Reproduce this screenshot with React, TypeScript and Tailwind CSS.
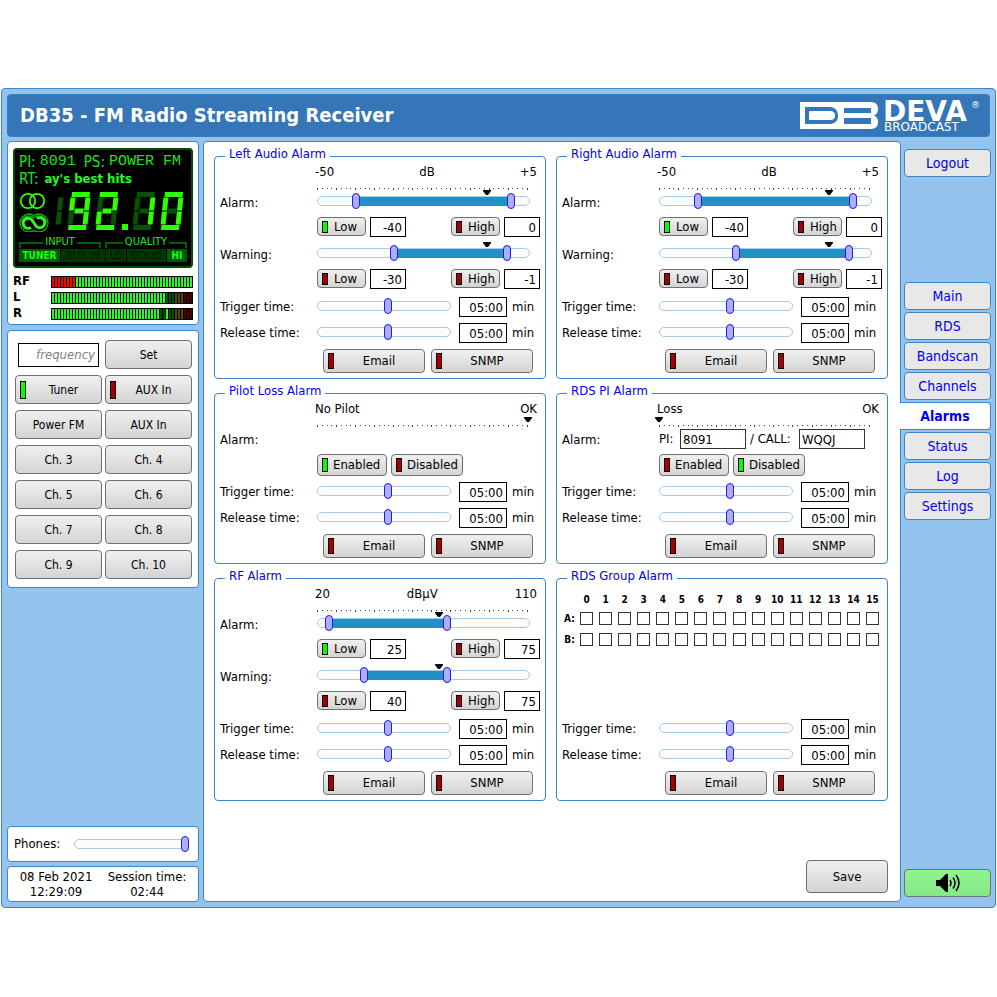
import clsx from "clsx";
import type { ReactNode } from "react";

const button =
  "flex items-center rounded border border-[#707070] bg-linear-to-b from-[#f0f0f0] from-0% via-[#e2e2e2] via-50% to-[#d4d4d4] text-black";
const field = "h-5 border border-black bg-white px-[3px] pt-px text-right";

const thumb =
  "[&::-webkit-slider-thumb]:pointer-events-auto [&::-webkit-slider-thumb]:h-4 [&::-webkit-slider-thumb]:w-2 [&::-webkit-slider-thumb]:appearance-none [&::-webkit-slider-thumb]:rounded-full [&::-webkit-slider-thumb]:border [&::-webkit-slider-thumb]:border-[#1c1cf0] [&::-webkit-slider-thumb]:bg-[#aeaeff]";
const rail = "rounded-full border border-[#a6cbe9] bg-[#fcfcfc]";

function Led({ on, className }: { on?: boolean; className?: string }) {
  return (
    <span
      className={clsx(
        "w-[6px] shrink-0 border border-black",
        on ? "bg-[#00ff00]" : "bg-[#a80000]",
        className
      )}
    />
  );
}

function SmallToggle({ on, children }: { on?: boolean; children: ReactNode }) {
  return (
    <button className={clsx(button, "h-[19px] w-[49px] gap-[6px] pl-1")}>
      <Led on={on} className="h-3" />
      {children}
    </button>
  );
}

function WideToggle({ children }: { children: ReactNode }) {
  return (
    <button className={clsx(button, "h-6 w-[102px] pl-1")}>
      <Led className="h-4" />
      <span className="flex-1 text-center">{children}</span>
    </button>
  );
}

function Slider({ label, value }: { label: string; value: number }) {
  return (
    <div className="relative flex h-4 flex-1 items-center">
      <div className={clsx(rail, "h-[10px] flex-1")} />
      <input
        type="range"
        aria-label={label}
        defaultValue={value}
        className={clsx("absolute inset-0 h-4 w-full appearance-none bg-transparent", thumb)}
      />
    </div>
  );
}

function Marker({ at }: { at: number }) {
  return (
    <svg
      viewBox="0 0 8 5"
      className="absolute top-0 h-[5px] w-2 -translate-x-1/2"
      style={{ left: `${at}%` }}
    >
      <path d="M0 0h8v1L5 5H3L0 1z" fill="#000" />
    </svg>
  );
}

type Level = { on?: boolean; value: number };

function RangeRow(props: {
  label: string;
  min: number;
  max: number;
  low: Level;
  high: Level;
  marker: number;
}) {
  const { label, min, max, low, high, marker } = props;
  const place = (v: number) => ((v - min) / (max - min)) * 100;
  // the inputs overhang the rail by half a thumb on both sides
  const input = clsx(
    "pointer-events-none absolute top-0 -left-1 h-4 w-[calc(100%+8px)] appearance-none bg-transparent",
    thumb
  );

  return (
    <div className="mb-[5px]">
      <div className="flex h-6 items-center">
        <span className="w-[97px] pt-0.5">{label}:</span>
        <div className="relative mr-[10px] flex h-6 flex-1 items-center pb-0.5">
          <Marker at={marker} />
          <div className="relative flex h-4 flex-1 items-center">
            <div className={clsx(rail, "h-[10px] flex-1")} />
            <div
              className="absolute h-[10px] border-t border-[#a6cbe9] bg-[#2190c2]"
              style={{ left: `${place(low.value)}%`, right: `${100 - place(high.value)}%` }}
            />
            <input type="range" aria-label={`${label} low`} min={min} max={max} defaultValue={low.value} className={input} />
            <input type="range" aria-label={`${label} high`} min={min} max={max} defaultValue={high.value} className={input} />
          </div>
        </div>
      </div>
      <div className="mt-[3px] ml-[97px] flex h-5 items-start gap-1">
        <SmallToggle on={low.on}>Low</SmallToggle>
        <input aria-label={`${label} low level`} defaultValue={low.value} className={clsx(field, "w-9")} />
        <span className="flex-1" />
        <SmallToggle on={high.on}>High</SmallToggle>
        <input aria-label={`${label} high level`} defaultValue={high.value} className={clsx(field, "w-9")} />
      </div>
    </div>
  );
}

function Scale({ labels, marker }: { labels: string[]; marker?: number }) {
  return (
    <>
      <div className="mr-[3px] ml-[95px] flex h-4 items-center justify-between">
        {labels.map((l) => (
          <span key={l}>{l}</span>
        ))}
      </div>
      <div className="relative mr-[10px] ml-[97px] flex h-[10px] items-end justify-between pr-0.5">
        {marker !== undefined && <Marker at={marker} />}
        {Array.from({ length: 45 }, (_, i) => (
          <span key={i} className={clsx("w-px bg-[#444]", i % 4 ? "mb-px h-px" : "h-0.5")} />
        ))}
      </div>
    </>
  );
}

function TimeRow({ label }: { label: string }) {
  return (
    <div className="flex h-[26px] items-center">
      <span className="w-[97px]">{label}:</span>
      <div className="flex flex-1 pb-0.5">
        <Slider label={label} value={53} />
      </div>
      <input aria-label={`${label} value`} defaultValue="05:00" className={clsx(field, "ml-2 w-12")} />
      <span className="w-[33px] pl-[5px]">min</span>
    </div>
  );
}

function Times() {
  return (
    <div className="mt-auto">
      <TimeRow label="Trigger time" />
      <TimeRow label="Release time" />
      <div className="mt-[3px] mr-[7px] flex justify-end gap-[6px]">
        <WideToggle>Email</WideToggle>
        <WideToggle>SNMP</WideToggle>
      </div>
    </div>
  );
}

function AlarmBox({ title, children }: { title: string; children: ReactNode }) {
  return (
    <fieldset className="flex min-w-0 flex-col rounded border border-[#3c86c8] px-[5px] pb-[5px]">
      <legend className="ml-[5px] h-4 px-1 leading-3 text-[#0000f0]">{title}</legend>
      {children}
    </fieldset>
  );
}

function EnableRow({ enabled }: { enabled: boolean }) {
  return (
    <div className="mt-[3px] mb-[3px] ml-[97px] flex gap-1">
      <button className={clsx(button, "h-[22px] w-[70px] gap-[5px] pl-1")}>
        <Led on={enabled} className="h-[14px]" />
        Enabled
      </button>
      <button className={clsx(button, "h-[22px] w-[72px] gap-[5px] pl-1")}>
        <Led on={!enabled} className="h-[14px]" />
        Disabled
      </button>
    </div>
  );
}

function AudioAlarm({ title }: { title: string }) {
  return (
    <AlarmBox title={title}>
      <Scale labels={["-50", "dB", "+5"]} />
      <RangeRow label="Alarm" min={-50} max={5} low={{ on: true, value: -40 }} high={{ value: 0 }} marker={80} />
      <RangeRow label="Warning" min={-50} max={5} low={{ value: -30 }} high={{ value: -1 }} marker={80} />
      <Times />
    </AlarmBox>
  );
}

function GroupAlarm() {
  const groups = Array.from({ length: 16 }, (_, i) => i);
  return (
    <AlarmBox title="RDS Group Alarm">
      <table className="mt-1 w-full table-fixed text-[10px] font-bold">
        <thead>
          <tr className="h-[18px]">
            <td className="w-[15px]" />
            {groups.map((g) => (
              <th key={g} scope="col" className="p-0 text-center align-bottom">
                {g}
              </th>
            ))}
          </tr>
        </thead>
        <tbody>
          {["A", "B"].map((row) => (
            <tr key={row} className="h-[21px]">
              <th scope="row" className="p-0 text-center">
                {row}:
              </th>
              {groups.map((g) => (
                <td key={g} className="p-0 text-center">
                  <input
                    type="checkbox"
                    aria-label={`Group ${g}${row}`}
                    className="mx-auto block size-[13px] appearance-none border border-[#333] bg-white checked:bg-[#0000e8]"
                  />
                </td>
              ))}
            </tr>
          ))}
        </tbody>
      </table>
      <Times />
    </AlarmBox>
  );
}

const segments: Record<string, [number, number, number, number]> = {
  a: [1, 2.5, 19, 2.5],
  b: [17.5, 5.5, 17.5, 18.5],
  c: [17.5, 19.5, 17.5, 32.5],
  d: [1, 35.5, 19, 35.5],
  e: [2.5, 19.5, 2.5, 32.5],
  f: [2.5, 5.5, 2.5, 18.5],
  g: [5.5, 19, 14.5, 19],
};

function Digit({ x, lit, show = "abcdefg" }: { x: number; lit: string; show?: string }) {
  return (
    <g transform={`translate(${x} 0) skewX(-6)`} strokeWidth="5">
      {show.split("").map((s) => {
        const [x1, y1, x2, y2] = segments[s];
        return (
          <line key={s} x1={x1} y1={y1} x2={x2} y2={y2} stroke={lit.includes(s) ? "#2dff00" : "#075200"} />
        );
      })}
    </g>
  );
}

function Display() {
  const cell = "flex h-[13px] items-center justify-center";
  const off = "bg-[#003600] text-[11px] text-[#001200]";
  const on = "bg-[#005a00] text-[10px] font-bold text-[#19ff19]";
  return (
    <div className="rounded border-2 border-[#005000] bg-black px-1 pt-[3px] pb-1 text-[#19e619]">
      <div className="flex h-[17px] items-center text-[15px] whitespace-nowrap">
        PI:
        <span className="ml-1 font-['Liberation_Mono'] text-[15px]">8091</span>
        <span className="ml-2">PS:</span>
        <span className="ml-1 font-['Liberation_Mono'] text-[15px] whitespace-pre">POWER FM</span>
      </div>
      <div className="flex h-[17px] items-center gap-[6px] text-[15px]">
        RT: <b className="text-[13px] text-[#1cff1c]">ay's best hits</b>
      </div>
      <div className="mt-1 flex h-[42px] items-center justify-between">
        <svg viewBox="0 0 30 40" className="h-10 w-[30px]" fill="none">
          <g stroke="#2dff00" strokeWidth="1.8">
            <circle cx="9" cy="9" r="7.200" />
            <circle cx="18" cy="9" r="7.200" />
          </g>
          <path
            d="M15 23.500A9 9 0 1 0 15 38.500A9 9 0 1 0 15 23.500M15 26A7 7 0 0 0 3 31M15 26A7 7 0 0 1 27 31"
            stroke="#1fae10"
            strokeWidth="1.300"
          />
          <path
            d="M12 35.500A5 5 0 1 1 13 28L17 34A5 5 0 1 0 18 26.500"
            stroke="#35f02a"
            strokeWidth="3"
          />
        </svg>
        <svg viewBox="0 0 134 40" className="h-10 w-[134px]" role="img" aria-label="92.10">
          <Digit x={-9} lit="" show="bc" />
          <Digit x={18} lit="abcdfg" />
          <Digit x={46} lit="abdeg" />
          <rect x="69" y="32" width="6" height="6" fill="#2dff00" />
          <Digit x={83} lit="bc" />
          <Digit x={111} lit="abcdef" />
        </svg>
      </div>
      <div className="mt-[3px] flex gap-1 text-[11px] leading-[12px]">
        {["INPUT", "QUALITY"].map((t) => (
          <div key={t} className="flex flex-1 items-end gap-0.5">
            <span className="h-[6px] flex-1 border-t-2 border-l-2 border-[#006000]" />
            {t}
            <span className="h-[6px] flex-1 border-t-2 border-r-2 border-[#006000]" />
          </div>
        ))}
      </div>
      <div className="mt-px flex gap-px">
        <span className={clsx(cell, on, "w-[41px]")}>TUNER</span>
        <span className={clsx(cell, off, "flex-1")}>AUX IN</span>
        <span className={clsx(cell, off, "w-5")}>LO</span>
        <span className={clsx(cell, off, "w-[39px]")}>GOOD</span>
        <span className={clsx(cell, on, "w-5")}>HI</span>
      </div>
    </div>
  );
}

const barColours: Record<string, string> = {
  r: "bg-[#ff0000]",
  g: "bg-[#20ff20]",
  d: "bg-[#0a4d0a]",
  y: "bg-[#4d4a00]",
  m: "bg-[#4d0000]",
};

function Meter({ name, bars }: { name: string; bars: string }) {
  return (
    <div className="flex h-4 items-center text-[13px] font-bold">
      <span className="w-[38px] pb-0.5">{name}</span>
      <div className="flex h-3 flex-1 gap-px border border-black bg-black">
        {bars.split("").map((b, i) => (
          <span key={i} className={clsx("flex-1", barColours[b])} />
        ))}
      </div>
    </div>
  );
}

function Logo() {
  return (
    <svg viewBox="0 0 182 41" className="h-[41px] w-[182px]" role="img" aria-label="DEVA Broadcast" fill="#fff">
      <path
        fillRule="evenodd"
        d="M0 7H78V34H0zM5 12V29H31Q38 28 38 20.500T31 12zM44 13V18H71V13zM44 23V29H71V23z"
        clipPath="url(#logo-edge)"
      />
      <path d="M9 16H30Q35 16 35 20.500T30 25H9z" />
      <clipPath id="logo-edge">
        <path d="M0 7H71Q78 7 78 14Q78 19 74 20.500Q78 22 78 27Q78 34 71 34H0z" />
      </clipPath>
      <text x="83" y="26" fontSize="28" fontWeight="bold" fontFamily="DejaVu Sans">
        DEVA
      </text>
      <text x="84" y="36" fontSize="12" fontFamily="DejaVu Sans">
        BROADCAST
      </text>
      <text x="171" y="13" fontSize="9" fontFamily="DejaVu Sans">
        ®
      </text>
    </svg>
  );
}

const panel = "rounded border border-[#3c86c8] bg-white";
const pages = ["Main", "RDS", "Bandscan", "Channels", "Alarms", "Status", "Log", "Settings"];
const presets = ["Power FM", "AUX In", "Ch. 3", "Ch. 4", "Ch. 5", "Ch. 6", "Ch. 7", "Ch. 8", "Ch. 9", "Ch. 10"];
const navItem =
  "flex h-7 items-center justify-center rounded border border-[#3c86c8] text-[14px] text-[#0000f0]";

export default function App() {
  return (
    <div className="min-h-screen bg-white px-px pt-[88px] pb-[89px] font-['DejaVu_Sans_Condensed','DejaVu_Sans',sans-serif] text-[13px] leading-4 text-black">
      <div className="rounded border border-[#3c86c8] bg-[#94c3ed] py-[5px] pr-1 pl-[5px]">
        <header className="mr-px flex h-[43px] items-center justify-between rounded border border-[#2f7fc4] bg-[#3476b8] pr-[7px] pl-3">
          <h1 className="pb-0.5 text-[20px] font-bold text-white">DB35 - FM Radio Streaming Receiver</h1>
          <Logo />
        </header>

        <div className="mt-1 flex">
          <aside className="mr-1 flex w-48 shrink-0 flex-col">
            <section className={clsx(panel, "px-[5px] pt-[6px] pb-0.5")}>
              <Display />
              <div className="mt-[6px]">
                <Meter name="RF" bars={"r".repeat(8) + "g".repeat(39)} />
                <Meter name="L" bars={"g".repeat(38) + "dddyyymmm"} />
                <Meter name="R" bars={"g".repeat(36) + "ddgddyyymmm"} />
              </div>
            </section>

            <section className={clsx(panel, "mt-[5px] grid grid-cols-2 gap-x-[3px] gap-y-[6px] pt-[9px] pr-[6px] pb-2 pl-[7px] text-[12px]")}>
              <input
                aria-label="Frequency"
                placeholder="frequency"
                className="mx-[3px] h-6 min-w-0 self-center border border-black px-[3px] text-right text-[13px] italic placeholder:text-[#808080]"
              />
              <button className={clsx(button, "h-[29px] justify-center")}>Set</button>
              <button className={clsx(button, "h-[29px] pl-1")}>
                <Led on className="h-[18px]" />
                <span className="flex-1 text-center">Tuner</span>
              </button>
              <button className={clsx(button, "h-[29px] pl-1")}>
                <Led className="h-[18px]" />
                <span className="flex-1 text-center">AUX In</span>
              </button>
              {presets.map((p) => (
                <button key={p} className={clsx(button, "h-[29px] justify-center")}>
                  {p}
                </button>
              ))}
            </section>

            <section className={clsx(panel, "mt-auto flex h-9 items-center gap-[14px] pr-[9px] pl-[6px]")}>
              <span>Phones:</span>
              <Slider label="Phones" value={100} />
            </section>
            <section className={clsx(panel, "mt-1 flex h-9 items-center justify-around px-1 text-center leading-[15px]")}>
              <div>
                08 Feb 2021
                <br />
                12:29:09
              </div>
              <div>
                Session time:
                <br />
                02:44
              </div>
            </section>
          </aside>

          <main className={clsx(panel, "flex min-w-0 flex-1 flex-col pt-[6px] pr-3 pb-2 pl-[10px]")}>
            <div className="grid grid-cols-2 gap-x-[10px] gap-y-[6px]">
              <AudioAlarm title="Left Audio Alarm" />
              <AudioAlarm title="Right Audio Alarm" />

              <AlarmBox title="Pilot Loss Alarm">
                <Scale labels={["No Pilot", "OK"]} marker={99} />
                <div className="flex h-6 items-center pt-0.5">Alarm:</div>
                <EnableRow enabled />
                <Times />
              </AlarmBox>

              <AlarmBox title="RDS PI Alarm">
                <Scale labels={["Loss", "OK"]} marker={0} />
                <div className="flex h-6 items-center">
                  <span className="w-[97px] pt-0.5">Alarm:</span>
                  <label htmlFor="pi" className="w-[21px]">PI:</label>
                  <input id="pi" defaultValue="8091" className="h-5 w-[66px] border border-[#333] px-0.5" />
                  <label htmlFor="call" className="w-[53px] pl-1">/ CALL:</label>
                  <input id="call" defaultValue="WQQJ" className="h-5 w-[66px] border border-[#333] px-0.5" />
                </div>
                <EnableRow enabled={false} />
                <Times />
              </AlarmBox>

              <AlarmBox title="RF Alarm">
                <Scale labels={["20", "dBµV", "110"]} />
                <RangeRow label="Alarm" min={20} max={110} low={{ on: true, value: 25 }} high={{ value: 75 }} marker={57.5} />
                <RangeRow label="Warning" min={20} max={110} low={{ value: 40 }} high={{ value: 75 }} marker={57.5} />
                <Times />
              </AlarmBox>

              <GroupAlarm />
            </div>
            <button className={clsx(button, "mt-[59px] h-[33px] w-[82px] justify-center self-end")}>Save</button>
          </main>

          <nav className="flex w-[90px] shrink-0 flex-col gap-0.5 pt-2 pb-[5px] pl-[3px]">
            <a href="#logout" className={clsx(navItem, "mb-[103px] bg-[#e8e8e8]")}>
              Logout
            </a>
            {pages.map((p) => (
              <a
                key={p}
                href={`#${p.toLowerCase()}`}
                className={clsx(
                  navItem,
                  p === "Alarms" ? "-ml-1 rounded-l-none border-l-0 bg-white font-bold" : "bg-[#e8e8e8]"
                )}
              >
                {p}
              </a>
            ))}
            <button
              aria-label="Sound"
              className="mt-auto flex h-7 items-center justify-center rounded border border-[#707070] bg-linear-to-b from-[#90f490] to-[#84e884]"
            >
              <svg viewBox="0 0 24 18" className="h-[18px] w-6" fill="none" stroke="#000" strokeWidth="1.500">
                <path d="M0 6h4l6-6h2v18h-2l-6-6H0z" fill="#000" stroke="none" />
                <path d="M14 6q2 3 0 6M17 3.500q4 5.500 0 11M20 1q6 8 0 16" />
              </svg>
            </button>
          </nav>
        </div>
      </div>
    </div>
  );
}
